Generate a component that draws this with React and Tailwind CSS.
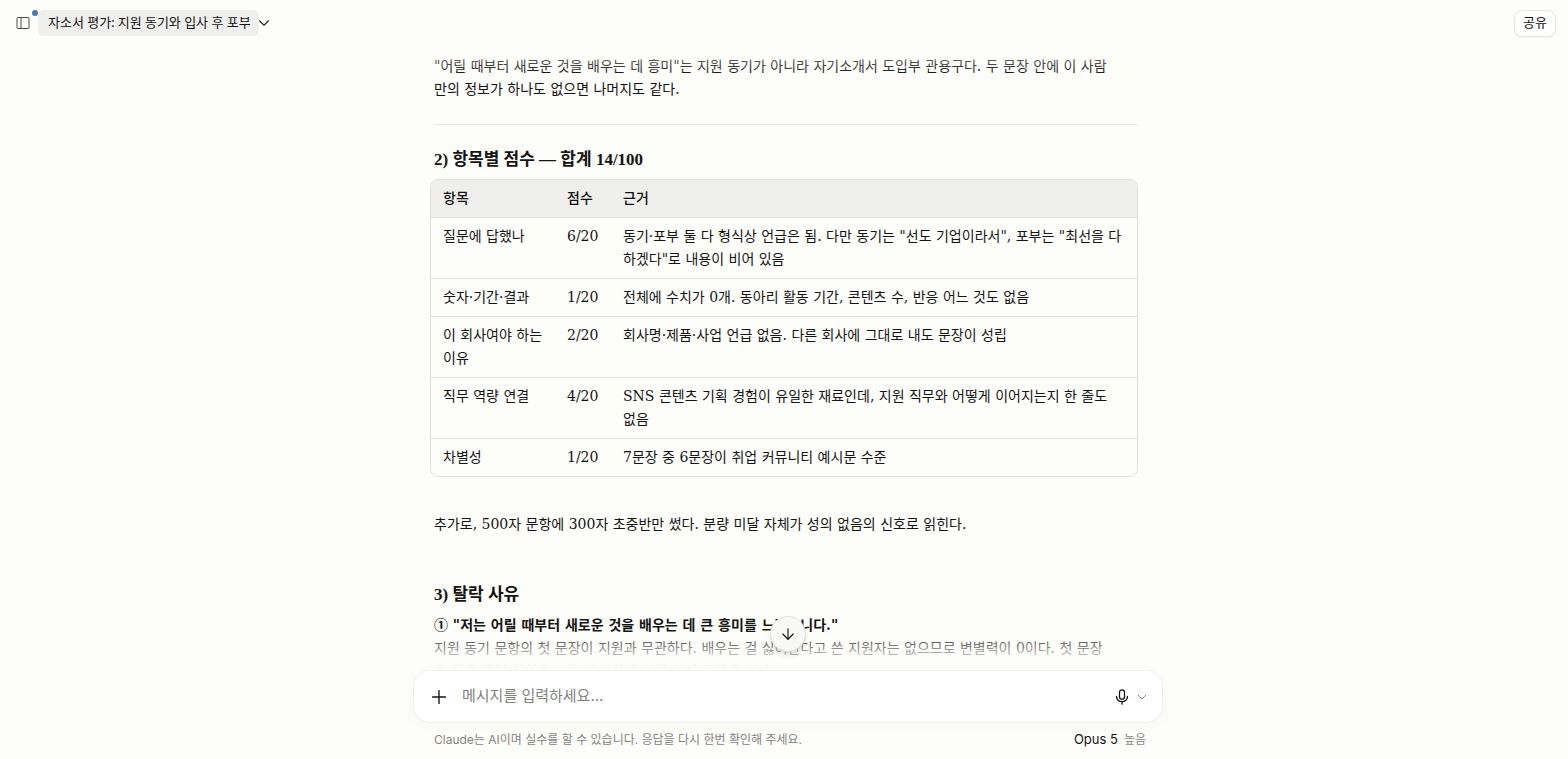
import { useState } from 'react';
import { ArrowDown, ChevronDown, Plus } from 'lucide-react';

const scores = [
  {
    item: '질문에 답했나',
    score: '6/20',
    reason: '동기·포부 둘 다 형식상 언급은 됨. 다만 동기는 "선도 기업이라서", 포부는 "최선을 다하겠다"로 내용이 비어 있음'
  },
  {
    item: '숫자·기간·결과',
    score: '1/20',
    reason: '전체에 수치가 0개. 동아리 활동 기간, 콘텐츠 수, 반응 어느 것도 없음'
  },
  {
    item: '이 회사여야 하는 이유',
    score: '2/20',
    reason: '회사명·제품·사업 언급 없음. 다른 회사에 그대로 내도 문장이 성립'
  },
  {
    item: '직무 역량 연결',
    score: '4/20',
    reason: 'SNS 콘텐츠 기획 경험이 유일한 재료인데, 지원 직무와 어떻게 이어지는지 한 줄도 없음'
  },
  {
    item: '차별성',
    score: '1/20',
    reason: '7문장 중 6문장이 취업 커뮤니티 예시문 수준'
  }
];

const SidebarIcon = () => (
  <svg width="14" height="14" viewBox="0 0 14 14" fill="none" stroke="currentColor">
    <rect x="1" y="1.5" width="12" height="11" rx="1" />
    <path d="M5 1.5v11" />
  </svg>
);

const MicIcon = () => (
  <svg width="16" height="16" viewBox="0 0 16 16" fill="none" stroke="currentColor" strokeWidth="1.3" strokeLinecap="round">
    <rect x="5.5" y="0.8" width="5" height="9.4" rx="2.5" />
    <path d="M2.5 7.5a5.5 5.2 0 0 0 11 0M8 12.8v2.4" />
  </svg>
);

const Header = () => (
  <header className="flex h-[46px] shrink-0 items-center justify-between pl-4 pr-3">
    <div className="flex items-center">
      <button aria-label="사이드바 열기" className="relative text-[#4a4a48]">
        <SidebarIcon />
        <span className="absolute -right-2 -top-1.5 size-1.5 rounded-full bg-[#4a73c4]" />
      </button>
      <button className="ml-2 h-[26px] rounded-md bg-[#efefed] px-2 pl-2.5 font-['Lato','Noto_Sans_CJK_KR',sans-serif] text-[13px]">
        자소서 평가: 지원 동기와 입사 후 포부
      </button>
      <button aria-label="대화 메뉴" className="-ml-1 text-[#2b2b2a]">
        <ChevronDown size={18} strokeWidth={1.5} />
      </button>
    </div>
    <button className="h-[27px] rounded-lg border border-[#e6e6e4] bg-[#fefefd] px-2 text-[13px] shadow-xs">
      공유
    </button>
  </header>
);

const ScoreTable = () => (
  <div className="-ml-1 overflow-hidden rounded-lg border border-[#e0e0de]">
    <table className="w-full table-fixed text-left">
      <thead className="bg-[#efefed]">
        <tr>
          <th className="w-[124px] px-3 py-[7px] font-medium">항목</th>
          <th className="w-14 px-3 py-[7px] font-medium">점수</th>
          <th className="px-3 py-[7px] font-medium">근거</th>
        </tr>
      </thead>
      <tbody>
        {scores.map((row) => (
          <tr key={row.item} className="border-t border-[#e0e0de] align-top">
            <td className="px-3 py-[7px] break-keep">{row.item}</td>
            <td className="px-3 py-[7px] whitespace-nowrap">{row.score}</td>
            <td className="py-[7px] pl-3 pr-[15px]">{row.reason}</td>
          </tr>
        ))}
      </tbody>
    </table>
  </div>
);

const Answer = () => (
  <article className="pl-5 pr-6 pt-[9px] font-['DejaVu_Serif','Noto_Sans_CJK_KR',serif] text-[14px] leading-[23px]">
    <p className="pr-6">
      "어릴 때부터 새로운 것을 배우는 데 흥미"는 지원 동기가 아니라 자기소개서 도입부 관용구다. 두 문장 안에 이 사람만의
      정보가 하나도 없으면 나머지도 같다.
    </p>
    <hr className="mt-[23px] border-[#e8e8e6]" />
    <h2 className="mb-2 mt-[23px] font-['Liberation_Serif','Noto_Sans_CJK_KR',serif] text-[17px] font-bold leading-[23px]">
      2) 항목별 점수 — 합계 14/100
    </h2>
    <ScoreTable />
    <p className="mt-9">
      추가로, 500자 문항에 300자 초중반만 썼다. 분량 미달 자체가 성의 없음의 신호로 읽힌다.
    </p>
    <h2 className="mb-2 mt-[47px] font-['Liberation_Serif','Noto_Sans_CJK_KR',serif] text-[17px] font-bold leading-[23px]">
      3) 탈락 사유
    </h2>
    <p className="pr-6">
      <strong className="block font-bold">① "저는 어릴 때부터 새로운 것을 배우는 데 큰 흥미를 느꼈습니다."</strong>
      지원 동기 문항의 첫 문장이 지원과 무관하다. 배우는 걸 싫어한다고 쓴 지원자는 없으므로 변별력이 0이다. 첫 문장은
      직무 관련 경험을 쓰는 자리인데 일반 인성 문장을 썼다.
    </p>
  </article>
);

const Composer = () => {
  const [message, setMessage] = useState('');

  return (
    <div className="relative z-10">
      <form
        onSubmit={(e) => e.preventDefault()}
        className="flex h-[51px] items-center rounded-2xl bg-white pl-3.5 pr-3 shadow-[0_0_0_1px_rgba(0,0,0,0.03),0_3px_16px_rgba(0,0,0,0.04)]"
      >
        <button type="button" aria-label="파일 추가">
          <Plus size={22} strokeWidth={1.5} />
        </button>
        <input
          type="text"
          aria-label="메시지"
          value={message}
          onChange={(e) => setMessage(e.target.value)}
          placeholder="메시지를 입력하세요..."
          className="ml-3 min-w-0 flex-1 bg-transparent text-[15px] outline-none placeholder:text-[#83837f]"
        />
        <button type="button" aria-label="음성 입력">
          <MicIcon />
        </button>
        <button type="button" aria-label="음성 설정" className="ml-1 text-[#8a8a87]">
          <ChevronDown size={16} strokeWidth={1.5} />
        </button>
      </form>
      <div className="flex h-[37px] items-center justify-between pb-0.5 pl-5 pr-4 text-[12px]">
        <p className="text-[#83837f]">Claude는 AI이며 실수를 할 수 있습니다. 응답을 다시 한번 확인해 주세요.</p>
        <button className="flex items-center gap-1.5">
          <span className="text-[13px]">Opus 5</span>
          <span className="text-[#8a8a87]">높음</span>
        </button>
      </div>
    </div>
  );
};

const App = () => (
  <div className="flex h-screen flex-col overflow-hidden bg-[#fdfdfa] font-['Inter','Noto_Sans_CJK_KR',sans-serif] text-[#141413]">
    <Header />
    <main className="flex min-h-0 flex-1 flex-col pl-2">
      <div className="mx-auto flex min-h-0 w-full max-w-[748px] flex-1 flex-col">
        <div className="relative min-h-0 flex-1">
          <div className="h-full overflow-hidden">
            <Answer />
          </div>
          {/* Fades at both ends of the scroll area */}
          <div className="pointer-events-none absolute inset-x-0 top-0 h-7 bg-linear-to-b from-[#fdfdfa]/60 to-transparent" />
          <div className="pointer-events-none absolute inset-x-0 bottom-0 h-10 bg-linear-to-t from-[#fdfdfa] from-10% via-[#fdfdfa]/60 to-transparent" />
          <button
            aria-label="맨 아래로 스크롤"
            className="absolute bottom-[19px] left-1/2 flex size-9 -translate-x-1/2 items-center justify-center rounded-full border border-[#e0e0de] bg-[#f8f8f6] shadow-md"
          >
            <ArrowDown size={18} strokeWidth={1.5} />
          </button>
        </div>
        <Composer />
      </div>
    </main>
  </div>
);

export default App;
